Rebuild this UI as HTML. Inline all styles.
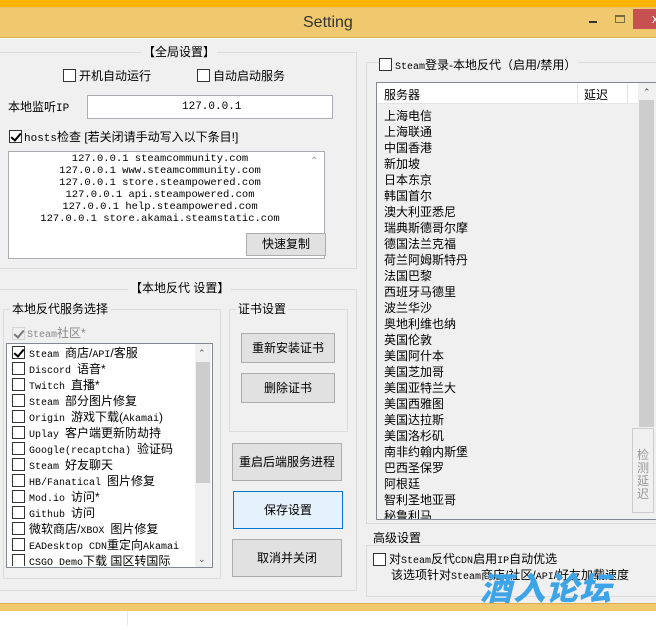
<!DOCTYPE html>
<html><head><meta charset="utf-8"><style>
*{margin:0;padding:0;box-sizing:border-box}
body{width:656px;height:630px;overflow:hidden;background:#fff;position:relative;font-family:"Liberation Sans","Noto Sans CJK SC",sans-serif;font-size:12px;color:#000}
.a{position:absolute}
.l{font-family:"Liberation Mono",monospace;font-size:10px}
.t{position:absolute;white-space:nowrap;line-height:14px}
.g{position:absolute;border:1px solid #dcdcdc}
.lab{position:absolute;background:#f0f0f0;padding:0 2px;white-space:nowrap;line-height:14px}
.cb{position:absolute;width:13px;height:13px;border:1px solid #333;background:#fff}
.btn{position:absolute;border:1px solid #adadad;background:#e1e1e1;text-align:center;font-size:12px}
.ck::after{content:"";position:absolute;left:3px;top:0px;width:4px;height:8px;border:solid #000;border-width:0 2px 2px 0;transform:rotate(40deg)}
</style></head><body>
<div class="a" style="left:0;top:0;width:656px;height:8px;background:#fbb500"></div>
<div class="a" style="left:0;top:7px;width:656px;height:1px;background:#e8c070"></div>
<div class="a" style="left:0;top:8px;width:656px;height:30px;background:#f0c86e;border-bottom:1px solid #d9ae55"></div>
<div class="t" style="left:303px;top:14px;font-size:16px;line-height:18px;color:#333">Setting</div>
<div class="a" style="left:589px;top:21px;width:8px;height:2px;background:#333"></div>
<div class="a" style="left:615px;top:15px;width:10px;height:8px;border:1px solid #7a6a40;border-top-width:2px"></div>
<div class="a" style="left:633px;top:9px;width:23px;height:20px;background:#c75050"></div>
<div class="t" style="left:652px;top:12px;color:#fff;font-size:13px">x</div>
<div class="a" style="left:0;top:39px;width:656px;height:564px;background:#f0f0f0"></div>

<div class="g" style="left:-2px;top:52px;width:359px;height:217px"></div>
<div class="lab" style="left:141px;top:45px">【全局设置】</div>
<div class="cb" style="left:63px;top:69px"></div><div class="t" style="left:79px;top:69px">开机自动运行</div>
<div class="cb" style="left:197px;top:69px"></div><div class="t" style="left:213px;top:69px">自动启动服务</div>
<div class="t" style="left:8px;top:100px">本地监听<span class="l" style="font-size:11px">IP</span></div>
<div class="a" style="left:87px;top:95px;width:246px;height:24px;background:#fff;border:1px solid #abadb3"></div>
<div class="t l" style="left:182px;top:100px;font-size:11px">127.0.0.1</div>
<div class="cb ck" style="left:9px;top:130px"></div>
<div class="t" style="left:24px;top:130px"><span class="l" style="font-size:11px">hosts</span>检查 [若关闭请手动写入以下条目!]</div>
<div class="a" style="left:8px;top:151px;width:317px;height:108px;background:#fff;border:1px solid #abadb3"></div>
<div class="a l" style="left:10px;top:153px;width:300px;text-align:center;line-height:12px;font-size:10.5px">127.0.0.1 steamcommunity.com<br>127.0.0.1 www.steamcommunity.com<br>127.0.0.1 store.steampowered.com<br>127.0.0.1 api.steampowered.com<br>127.0.0.1 help.steampowered.com<br>127.0.0.1 store.akamai.steamstatic.com</div>
<div class="t" style="left:310px;top:155px;color:#999;font-size:10px">⌃</div>
<div class="btn" style="left:246px;top:233px;width:80px;height:23px;line-height:21px">快速复制</div>

<div class="g" style="left:-2px;top:289px;width:359px;height:302px"></div>
<div class="lab" style="left:128px;top:281px">【本地反代 设置】</div>
<div class="g" style="left:3px;top:309px;width:218px;height:270px"></div>
<div class="lab" style="left:10px;top:302px">本地反代服务选择</div>
<div class="cb ck" style="left:12px;top:327px;border-color:#bbb;background:#eee;opacity:.5"></div>
<div class="t" style="left:27px;top:326px;color:#888"><span class="l">Steam</span>社区*</div>
<div class="a" style="left:6px;top:343px;width:207px;height:225px;background:#fff;border:1px solid #828790"></div>
<div class="a" style="left:195px;top:344px;width:16px;height:223px;background:#f0f0f0"></div>
<div class="a" style="left:196px;top:362px;width:14px;height:121px;background:#cdcdcd"></div>
<div class="t" style="left:198px;top:346px;font-size:9px;color:#555">⌃</div>
<div class="t" style="left:198px;top:552px;font-size:9px;color:#555">⌄</div>
<div class="a" style="left:7px;top:344px;width:188px;height:222px;overflow:hidden">
<div class="cb ck" style="left:5px;top:2px"></div><div class="t" style="left:22px;top:2px"><span class="l">Steam </span>商店/<span class="l">API</span>/客服</div>
<div class="cb" style="left:5px;top:18px"></div><div class="t" style="left:22px;top:18px"><span class="l">Discord </span>语音*</div>
<div class="cb" style="left:5px;top:34px"></div><div class="t" style="left:22px;top:34px"><span class="l">Twitch </span>直播*</div>
<div class="cb" style="left:5px;top:50px"></div><div class="t" style="left:22px;top:50px"><span class="l">Steam </span>部分图片修复</div>
<div class="cb" style="left:5px;top:66px"></div><div class="t" style="left:22px;top:66px"><span class="l">Origin </span>游戏下载(<span class="l">Akamai</span>)</div>
<div class="cb" style="left:5px;top:82px"></div><div class="t" style="left:22px;top:82px"><span class="l">Uplay </span>客户端更新防劫持</div>
<div class="cb" style="left:5px;top:98px"></div><div class="t" style="left:22px;top:98px"><span class="l">Google(recaptcha) </span>验证码</div>
<div class="cb" style="left:5px;top:114px"></div><div class="t" style="left:22px;top:114px"><span class="l">Steam </span>好友聊天</div>
<div class="cb" style="left:5px;top:130px"></div><div class="t" style="left:22px;top:130px"><span class="l">HB/Fanatical </span>图片修复</div>
<div class="cb" style="left:5px;top:146px"></div><div class="t" style="left:22px;top:146px"><span class="l">Mod.io </span>访问*</div>
<div class="cb" style="left:5px;top:162px"></div><div class="t" style="left:22px;top:162px"><span class="l">Github </span>访问</div>
<div class="cb" style="left:5px;top:178px"></div><div class="t" style="left:22px;top:178px">微软商店/<span class="l">XBOX </span>图片修复</div>
<div class="cb" style="left:5px;top:194px"></div><div class="t" style="left:22px;top:194px"><span class="l">EADesktop CDN</span>重定向<span class="l">Akamai</span></div>
<div class="cb" style="left:5px;top:210px"></div><div class="t" style="left:22px;top:210px"><span class="l">CSGO Demo</span>下载 国区转国际</div>
</div>
<div class="g" style="left:229px;top:309px;width:119px;height:123px"></div>
<div class="lab" style="left:236px;top:302px">证书设置</div>
<div class="btn" style="left:241px;top:333px;width:94px;height:30px;line-height:28px">重新安装证书</div>
<div class="btn" style="left:241px;top:373px;width:94px;height:30px;line-height:28px">删除证书</div>
<div class="btn" style="left:232px;top:443px;width:110px;height:38px;line-height:36px">重启后端服务进程</div>
<div class="btn" style="left:233px;top:491px;width:110px;height:38px;line-height:36px;border-color:#0078d7;background:#e5f1fb">保存设置</div>
<div class="btn" style="left:232px;top:539px;width:110px;height:38px;line-height:36px">取消并关闭</div>

<div class="g" style="left:366px;top:62px;width:295px;height:462px"></div>
<div class="lab" style="left:379px;top:56px;padding-left:0"><span class="cb" style="position:relative;display:inline-block;top:2px;margin-right:3px"></span><span class="l">Steam</span>登录-本地反代（启用/禁用）</div>
<div class="a" style="left:376px;top:82px;width:285px;height:438px;background:#f0f0f0;border:1px solid #828790"></div>
<div class="a" style="left:377px;top:83px;width:261px;height:21px;background:#fff;border-bottom:1px solid #e5e5e5"></div>
<div class="a" style="left:577px;top:83px;width:1px;height:21px;background:#e5e5e5"></div>
<div class="a" style="left:627px;top:83px;width:1px;height:21px;background:#e5e5e5"></div>
<div class="t" style="left:384px;top:88px">服务器</div>
<div class="t" style="left:584px;top:88px">延迟</div>
<div class="a" style="left:638px;top:83px;width:17px;height:436px;background:#f0f0f0"></div>
<div class="a" style="left:639px;top:100px;width:15px;height:327px;background:#cdcdcd"></div>
<div class="t" style="left:643px;top:85px;font-size:9px;color:#444">⌃</div>
<div class="a" style="left:632px;top:428px;width:22px;height:85px;border:1px solid #ccc;background:#f0f0f0;color:#999;line-height:13px;text-align:center;padding-top:20px">检<br>测<br>延<br>迟</div>
<div class="a" style="left:384px;top:108px;line-height:16px;height:411px;overflow:hidden;width:240px">上海电信<br>上海联通<br>中国香港<br>新加坡<br>日本东京<br>韩国首尔<br>澳大利亚悉尼<br>瑞典斯德哥尔摩<br>德国法兰克福<br>荷兰阿姆斯特丹<br>法国巴黎<br>西班牙马德里<br>波兰华沙<br>奥地利维也纳<br>英国伦敦<br>美国阿什本<br>美国芝加哥<br>美国亚特兰大<br>美国西雅图<br>美国达拉斯<br>美国洛杉矶<br>南非约翰内斯堡<br>巴西圣保罗<br>阿根廷<br>智利圣地亚哥<br>秘鲁利马</div>
<div class="g" style="left:366px;top:545px;width:295px;height:52px"></div>
<div class="lab" style="left:371px;top:531px">高级设置</div>
<div class="cb" style="left:373px;top:553px"></div>
<div class="t" style="left:389px;top:552px">对<span class="l">Steam</span>反代<span class="l">CDN</span>启用<span class="l">IP</span>自动优选</div>
<div class="t" style="left:391px;top:568px">该选项针对<span class="l">Steam</span>商店/社区/<span class="l">API</span>/好友加载速度</div>
<div class="t" style="left:480px;top:570px;font-size:32px;line-height:34px;font-weight:900;font-style:italic;color:#3da4e8;letter-spacing:1px;font-family:'Noto Sans CJK SC',sans-serif">酒入论坛</div>

<div class="a" style="left:0;top:603px;width:656px;height:8px;background:#f0c86e;border-top:1px solid #d9ae55"></div>
<div class="a" style="left:127px;top:611px;width:1px;height:15px;background:#e8e8e8"></div>
</body></html>
